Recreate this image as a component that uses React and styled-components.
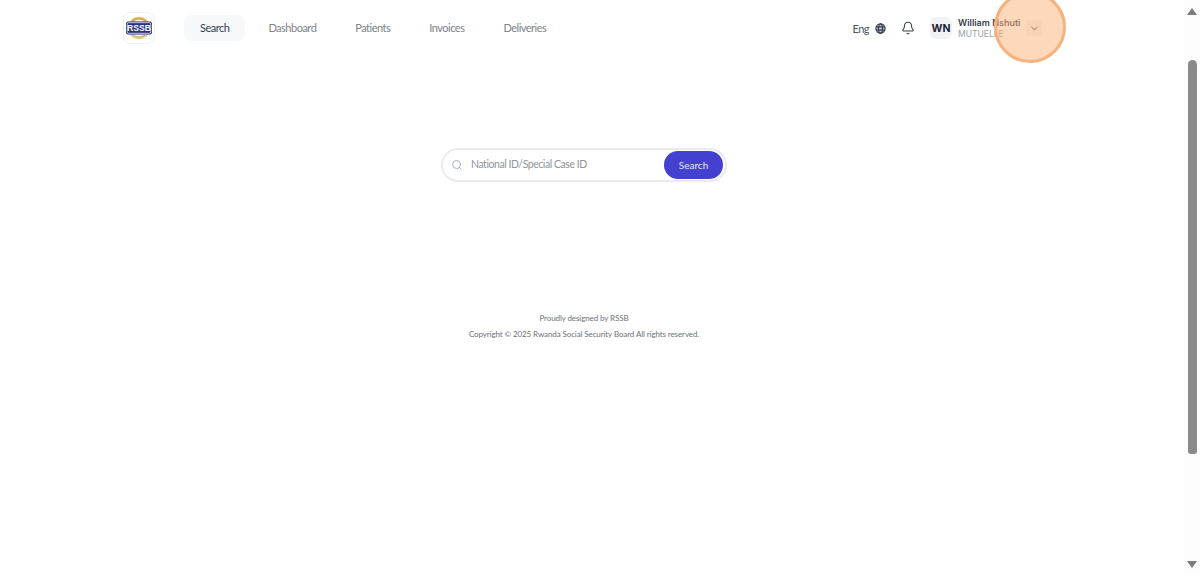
import styled, { createGlobalStyle } from "styled-components";
import { Search as SearchIcon, Bell, ChevronDown } from "lucide-react";

const GlobalStyle = createGlobalStyle`
  html, body {
    margin: 0;
    padding: 0;
    height: 100%;
    overflow: hidden;
    background: #fff;
    font-family: "Lato", "Noto Sans", sans-serif;
  }
  #root {
    height: 100%;
  }
`;

const Shell = styled.div`
  display: flex;
  height: 575px;
  width: 1200px;
  position: relative;
  overflow: hidden;
`;

const Page = styled.div`
  width: 1168px;
  flex: none;
  display: flex;
  flex-direction: column;
`;

const Gutter = styled.div`
  flex: 1;
`;

const Scrollbar = styled.div`
  width: 16px;
  flex: none;
  background: #fdfdfd;
  display: flex;
  flex-direction: column;
  align-items: center;
  padding: 8px 0 7px;
  box-sizing: border-box;
`;

const Arrow = styled.div`
  flex: none;
  width: 0;
  height: 0;
  border-left: 5px solid transparent;
  border-right: 5px solid transparent;
  ${(props) =>
    props.$down
      ? "border-top: 7px solid #7a7a7a;"
      : "border-bottom: 7px solid #7a7a7a;"}
`;

const Track = styled.div`
  flex: 1;
  width: 100%;
  display: flex;
  justify-content: center;
  padding: 45px 0 107px;
  box-sizing: border-box;
`;

const Thumb = styled.div`
  width: 9px;
  height: 100%;
  background: #8a8a8a;
  border-radius: 5px 5px 3px 3px;
`;

const Header = styled.header`
  height: 56px;
  padding: 0 126px 0 123px;
  display: flex;
  align-items: center;
  justify-content: space-between;
`;

const Left = styled.div`
  display: flex;
  align-items: center;
  gap: 29px;
`;

const LogoBox = styled.div`
  width: 32px;
  height: 32px;
  border: 1px solid #eff0f2;
  border-radius: 8px;
  display: flex;
  align-items: center;
  justify-content: center;
  box-sizing: border-box;
`;

const Nav = styled.nav`
  display: flex;
  align-items: center;
  gap: 7px;
`;

const NavItem = styled.a`
  height: 26px;
  padding: 0 16px 2px;
  box-sizing: border-box;
  display: flex;
  align-items: center;
  border-radius: 8px;
  font-size: 11px;
  letter-spacing: -0.5px;
  color: ${(props) => (props.$active ? "#344054" : "#7d828a")};
  background: ${(props) => (props.$active ? "#f6f8fa" : "transparent")};
`;

const Right = styled.div`
  display: flex;
  align-items: center;
`;

const Lang = styled.div`
  display: flex;
  align-items: center;
  gap: 6px;
  font-size: 11px;
  letter-spacing: -0.5px;
  color: #475467;
  margin-right: 15px;
`;

const BellWrap = styled.div`
  display: flex;
  color: #344054;
  margin-right: 15px;
`;

const Avatar = styled.div`
  width: 22px;
  height: 22px;
  border-radius: 6px;
  background: #f2f3f5;
  display: flex;
  align-items: center;
  justify-content: center;
  font-family: "Inter", sans-serif;
  font-size: 10.5px;
  font-weight: 700;
  color: #1d2433;
  margin-right: 6px;
`;

const UserText = styled.div`
  display: flex;
  flex-direction: column;
  padding-top: 1px;
  margin-right: 6px;
  width: 62px;
`;

const UserName = styled.div`
  font-family: "Inter", sans-serif;
  font-size: 9px;
  font-weight: 600;
  line-height: 12px;
  color: #3a3f4a;
  white-space: nowrap;
`;

const UserRole = styled.div`
  font-family: "Inter", sans-serif;
  font-size: 8.5px;
  line-height: 11px;
  color: #9a9ea6;
`;

const Chevron = styled.div`
  width: 16px;
  height: 16px;
  border-radius: 4px;
  background: #f4f5f7;
  display: flex;
  align-items: center;
  justify-content: center;
  color: #6b7280;
`;

const Main = styled.main`
  display: flex;
  flex-direction: column;
  align-items: center;
  padding-top: 92px;
`;

const SearchBar = styled.form`
  width: 286px;
  height: 34px;
  border: 2px solid #eaebef;
  border-radius: 17px;
  display: flex;
  align-items: center;
  padding: 0 2px 0 8px;
  box-sizing: border-box;
  color: #98a2b3;
`;

const Placeholder = styled.div`
  flex: 1;
  margin-left: 8px;
  padding-bottom: 3px;
  font-size: 10.5px;
  letter-spacing: -0.45px;
  color: #8f949c;
`;

const SearchButton = styled.button`
  width: 59px;
  height: 28px;
  border: none;
  border-radius: 14px;
  background: #4440d0;
  color: #e8e8fb;
  font-family: inherit;
  font-size: 10px;
  padding: 0;
`;

const Footer = styled.footer`
  margin-top: 131px;
  display: flex;
  flex-direction: column;
  align-items: center;
  gap: 5px;
  font-size: 8px;
  line-height: 11px;
  letter-spacing: -0.1px;
  color: #6d7178;
`;

const Highlight = styled.div`
  position: absolute;
  left: 994px;
  top: -9px;
  width: 72px;
  height: 72px;
  border-radius: 50%;
  border: 3px solid #f6b27c;
  background: rgba(251, 178, 120, 0.5);
  box-sizing: border-box;
`;

const Logo = () => (
  <svg width="28" height="28" viewBox="0 0 28 28">
    <circle cx="14" cy="14" r="10.5" fill="#f7f4ea" stroke="#e3cfa0" strokeWidth="1.6" />
    <path d="M7 7.5 A9.5 9.5 0 0 1 21 7.5" fill="none" stroke="#e0a642" strokeWidth="2" />
    <path d="M8 21 A9.5 9.5 0 0 0 20 21" fill="none" stroke="#cdb77f" strokeWidth="1.6" />
    <rect x="1" y="7.5" width="26" height="13" rx="2.5" fill="#27337a" />
    <rect x="2.2" y="8.7" width="23.6" height="10.6" rx="1.6" fill="none" stroke="#fff" strokeWidth="0.7" />
    <text x="14" y="17.4" textAnchor="middle" fontFamily="Liberation Sans, sans-serif" fontSize="8.6" fontWeight="700" fill="#fff">RSSB</text>
  </svg>
);

const Globe = () => (
  <svg width="11" height="11" viewBox="0 0 12 12" fill="none" stroke="#344054" strokeWidth="1.3">
    <circle cx="6" cy="6" r="5" fill="#344054" fillOpacity="0.3" />
    <ellipse cx="6" cy="6" rx="2.2" ry="5" />
    <path d="M1 4.2h10M1 7.8h10" />
  </svg>
);

export default function App() {
  const links = ["Search", "Dashboard", "Patients", "Invoices", "Deliveries"];

  return (
    <>
      <GlobalStyle />
      <Shell>
        <Page>
          <Header>
            <Left>
              <LogoBox>
                <Logo />
              </LogoBox>
              <Nav>
                {links.map((link, index) => (
                  <NavItem key={link} $active={index === 0}>
                    {link}
                  </NavItem>
                ))}
              </Nav>
            </Left>
            <Right>
              <Lang>
                Eng <Globe />
              </Lang>
              <BellWrap>
                <Bell size={14} strokeWidth={1.8} />
              </BellWrap>
              <Avatar>WN</Avatar>
              <UserText>
                <UserName>William Nshuti</UserName>
                <UserRole>MUTUELLE</UserRole>
              </UserText>
              <Chevron>
                <ChevronDown size={11} strokeWidth={2.2} />
              </Chevron>
            </Right>
          </Header>
          <Main>
            <SearchBar>
              <SearchIcon size={12} strokeWidth={1.7} />
              <Placeholder>National ID/Special Case ID</Placeholder>
              <SearchButton type="button">Search</SearchButton>
            </SearchBar>
            <Footer>
              <div>Proudly designed by RSSB</div>
              <div>Copyright © 2025 Rwanda Social Security Board All rights reserved.</div>
            </Footer>
          </Main>
        </Page>
        <Gutter />
        <Scrollbar>
          <Arrow />
          <Track>
            <Thumb />
          </Track>
          <Arrow $down />
        </Scrollbar>
        <Highlight />
      </Shell>
    </>
  );
}
